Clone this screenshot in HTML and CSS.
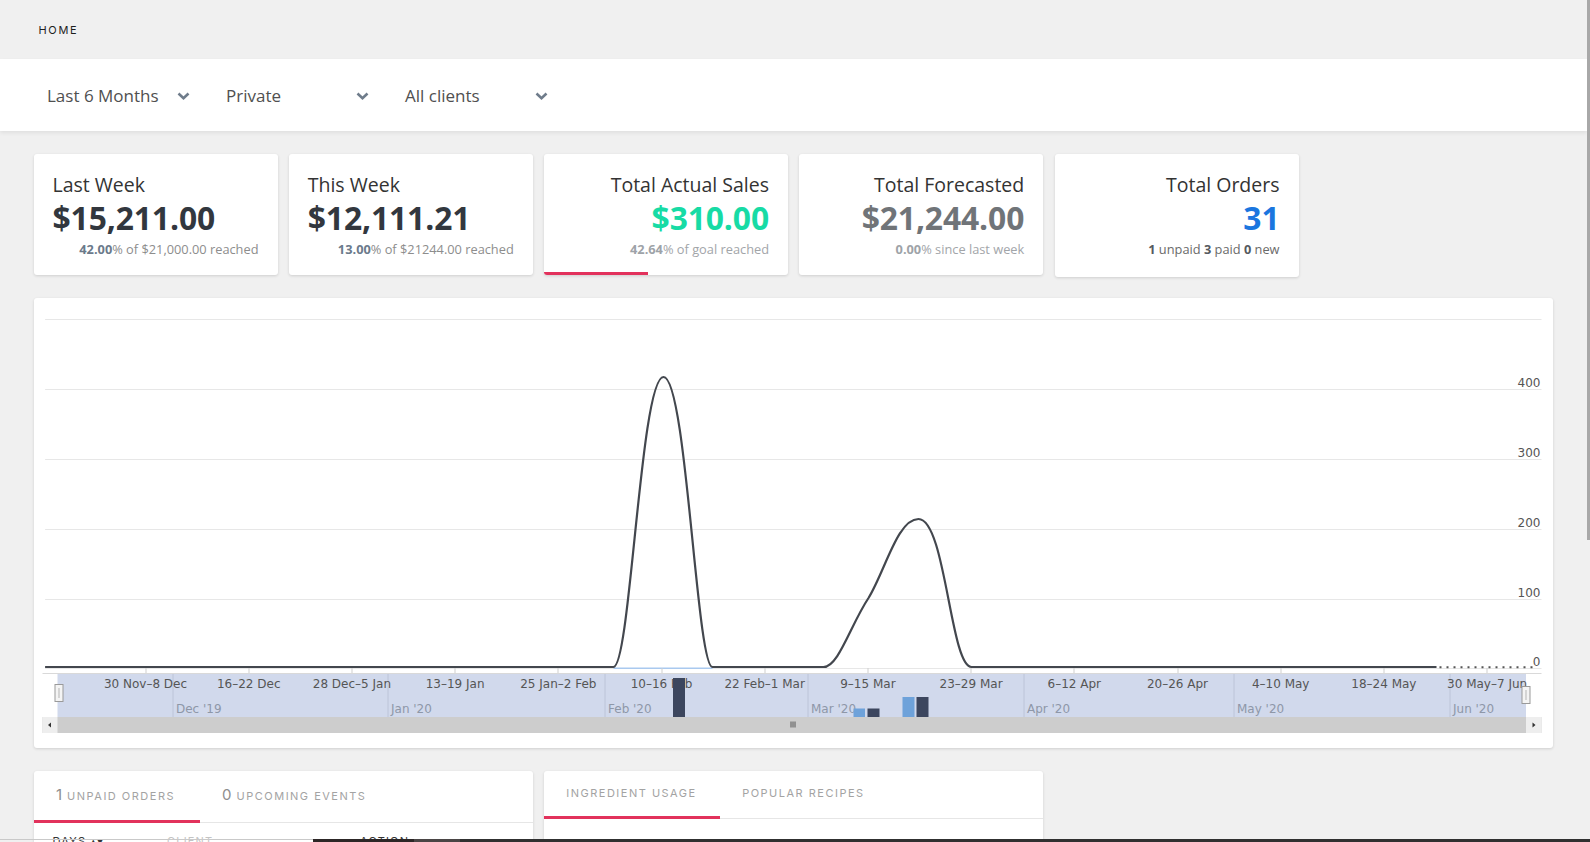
FILE: index.html
```html
<!DOCTYPE html>
<html lang="en">
<head>
<meta charset="utf-8">
<title>Home</title>
<link rel="stylesheet" href="styles.css">
</head>
<body>
<div class="page">
  <header class="topbar"><span class="crumb">HOME</span></header>

  <div class="filters">
    <div class="filter"><span>Last 6 Months</span><svg class="chev" viewBox="0 0 13 8"><polyline points="1.5,1.5 6.5,6.2 11.5,1.5"/></svg></div>
    <div class="filter"><span>Private</span><svg class="chev" viewBox="0 0 13 8"><polyline points="1.5,1.5 6.5,6.2 11.5,1.5"/></svg></div>
    <div class="filter"><span>All clients</span><svg class="chev" viewBox="0 0 13 8"><polyline points="1.5,1.5 6.5,6.2 11.5,1.5"/></svg></div>
  </div>

  <main class="content">
    <section class="stats">
      <div class="stat">
        <div class="stat-title">Last Week</div>
        <div class="stat-value">$15,211.00</div>
        <div class="stat-sub"><b>42.00</b>% of $21,000.00 reached</div>
      </div>
      <div class="stat">
        <div class="stat-title">This Week</div>
        <div class="stat-value">$12,111.21</div>
        <div class="stat-sub"><b>13.00</b>% of $21244.00 reached</div>
      </div>
      <div class="stat right">
        <div class="stat-title">Total Actual Sales</div>
        <div class="stat-value green">$310.00</div>
        <div class="stat-sub muted"><b>42.64</b>% of goal reached</div>
        <div class="progress" style="width:42.64%"></div>
      </div>
      <div class="stat right">
        <div class="stat-title">Total Forecasted</div>
        <div class="stat-value grey">$21,244.00</div>
        <div class="stat-sub muted"><b>0.00</b>% since last week</div>
      </div>
      <div class="stat right tall">
        <div class="stat-title">Total Orders</div>
        <div class="stat-value blue">31</div>
        <div class="stat-sub dark"><b>1</b> unpaid <b>3</b> paid <b>0</b> new</div>
      </div>
    </section>

    <section class="chart-card">
      <svg class="chart" viewBox="33.5 298 1519.5 450" width="1519.5" height="450">
        <g stroke="#e7e7e7" stroke-width="1">
          <line x1="44.6" x2="1541" y1="319.5" y2="319.5"/>
          <line x1="44.6" x2="1541" y1="389.5" y2="389.5"/>
          <line x1="44.6" x2="1541" y1="459.5" y2="459.5"/>
          <line x1="44.6" x2="1541" y1="529.5" y2="529.5"/>
          <line x1="44.6" x2="1541" y1="599.5" y2="599.5"/>
          <line x1="44.6" x2="1541" y1="668.5" y2="668.5"/>
        </g>
        <g font-family="DejaVu Sans, sans-serif" font-size="12" fill="#555" text-anchor="end">
          <text x="1540" y="386.5">400</text>
          <text x="1540" y="456.5">300</text>
          <text x="1540" y="526.5">200</text>
          <text x="1540" y="596.5">100</text>
          <text x="1540" y="665.5">0</text>
        </g>
        <line x1="613" x2="712" y1="668.3" y2="668.3" stroke="#a9c9ef" stroke-width="1.5"/>
        <path d="M44.6,667 L613,667 C630,667 640,377 663,377 C686,377 696,667 712,667 L823,667 C838,667 850,625 868,598 C885,570 897,519 918,519 C945,519 950,667 971,667 L1436,667" fill="none" stroke="#43474e" stroke-width="2.2" stroke-linejoin="round"/>
        <line x1="1439" x2="1532" y1="667.2" y2="667.2" stroke="#555" stroke-width="2" stroke-dasharray="2 5"/>

        <g stroke="#cfcfcf" stroke-width="1">
          <line x1="145.5" x2="145.5" y1="668" y2="674"/>
          <line x1="248.5" x2="248.5" y1="668" y2="674"/>
          <line x1="351.5" x2="351.5" y1="668" y2="674"/>
          <line x1="454.5" x2="454.5" y1="668" y2="674"/>
          <line x1="557.5" x2="557.5" y1="668" y2="674"/>
          <line x1="661.5" x2="661.5" y1="668" y2="674"/>
          <line x1="764.5" x2="764.5" y1="668" y2="674"/>
          <line x1="867.5" x2="867.5" y1="668" y2="674"/>
          <line x1="970.5" x2="970.5" y1="668" y2="674"/>
          <line x1="1073.5" x2="1073.5" y1="668" y2="674"/>
          <line x1="1177.5" x2="1177.5" y1="668" y2="674"/>
          <line x1="1280.5" x2="1280.5" y1="668" y2="674"/>
          <line x1="1383.5" x2="1383.5" y1="668" y2="674"/>
          <line x1="1486.5" x2="1486.5" y1="668" y2="674"/>
        </g>

        <line x1="42" x2="1541" y1="673.5" y2="673.5" stroke="#d9d9d9"/>
        <rect x="57" y="674" width="1468.5" height="43" fill="#d1d9ec"/>
        <g stroke="#bcc4d8" stroke-width="1">
          <line x1="172.5" x2="172.5" y1="674" y2="717"/>
          <line x1="387.5" x2="387.5" y1="674" y2="717"/>
          <line x1="604.5" x2="604.5" y1="674" y2="717"/>
          <line x1="807.5" x2="807.5" y1="674" y2="717"/>
          <line x1="1023.5" x2="1023.5" y1="674" y2="717"/>
          <line x1="1233.5" x2="1233.5" y1="674" y2="717"/>
          <line x1="1449.5" x2="1449.5" y1="674" y2="717"/>
        </g>
        <g font-family="DejaVu Sans, sans-serif" font-size="12" fill="#555" text-anchor="middle">
          <text x="145" y="688">30 Nov–8 Dec</text>
          <text x="248.2" y="688">16–22 Dec</text>
          <text x="351.4" y="688">28 Dec–5 Jan</text>
          <text x="454.6" y="688">13–19 Jan</text>
          <text x="557.8" y="688">25 Jan–2 Feb</text>
          <text x="661" y="688">10–16 Feb</text>
          <text x="764.2" y="688">22 Feb–1 Mar</text>
          <text x="867.4" y="688">9–15 Mar</text>
          <text x="970.6" y="688">23–29 Mar</text>
          <text x="1073.8" y="688">6–12 Apr</text>
          <text x="1177" y="688">20–26 Apr</text>
          <text x="1280.2" y="688">4–10 May</text>
          <text x="1383.4" y="688">18–24 May</text>
          <text x="1486.6" y="688">30 May–7 Jun</text>
        </g>
        <g font-family="DejaVu Sans, sans-serif" font-size="12" fill="#8e97a8">
          <text x="175.5" y="712.5">Dec '19</text>
          <text x="390.5" y="712.5">Jan '20</text>
          <text x="607.5" y="712.5">Feb '20</text>
          <text x="810.5" y="712.5">Mar '20</text>
          <text x="1026.5" y="712.5">Apr '20</text>
          <text x="1236.5" y="712.5">May '20</text>
          <text x="1452.5" y="712.5">Jun '20</text>
        </g>
        <g>
          <rect x="672.5" y="678" width="12" height="39" fill="#3c465e"/>
          <rect x="853" y="708.5" width="11.5" height="8.5" fill="#6ea2da"/>
          <rect x="867" y="708.5" width="12" height="8.5" fill="#3c465e"/>
          <rect x="902" y="697" width="12" height="20" fill="#6ea2da"/>
          <rect x="916" y="697" width="12" height="20" fill="#3c465e"/>
        </g>

        <rect x="42" y="717" width="1499" height="16" fill="#cdcdcd"/>
        <rect x="42" y="717" width="15" height="16" fill="#eeeeee"/>
        <rect x="1525.5" y="717" width="15.5" height="16" fill="#eeeeee"/>
        <polygon points="47.5,725 50.5,722.5 50.5,727.5" fill="#333"/>
        <polygon points="1535,725 1532,722.5 1532,727.5" fill="#333"/>
        <g stroke="#555" stroke-width="1">
          <line x1="790.5" x2="790.5" y1="721.5" y2="727.5"/>
          <line x1="792.5" x2="792.5" y1="721.5" y2="727.5"/>
          <line x1="794.5" x2="794.5" y1="721.5" y2="727.5"/>
        </g>
        <g>
          <rect x="54.5" y="684.5" width="8" height="17" fill="#f4f4f4" stroke="#9a9a9a"/>
          <line x1="58.5" x2="58.5" y1="688" y2="698" stroke="#b5b5b5"/>
          <rect x="1521.5" y="686.5" width="8" height="17" fill="#f4f4f4" stroke="#9a9a9a"/>
          <line x1="1525.5" x2="1525.5" y1="690" y2="700" stroke="#b5b5b5"/>
        </g>
      </svg>
    </section>

    <section class="lower">
      <div class="tabcard a">
        <div class="tabs">
          <div class="tab active"><span class="num">1</span>Unpaid Orders</div>
          <div class="tab"><span class="num">0</span>Upcoming Events</div>
        </div>
        <div class="thead">
          <span class="th">Days ▴▾</span>
          <span class="th light">Client</span>
          <span class="th">Action</span>
        </div>
      </div>
      <div class="tabcard b">
        <div class="tabs">
          <div class="tab active">Ingredient Usage</div>
          <div class="tab">Popular Recipes</div>
        </div>
      </div>
    </section>
  </main>
</div>

<div class="vscroll"></div>
<div class="bottombar"><span class="bb-left"></span><span class="bb-dark"></span><span class="bb-mid"></span><span class="bb-dark2"></span></div>
</body>
</html>
```

FILE: styles.css
```css
* {
  box-sizing: border-box;
  margin: 0;
  padding: 0;
}

html,
body {
  width: 1590px;
  height: 842px;
  overflow: hidden;
}

body {
  background: #f0f0f0;
  font-family: "Open Sans", "Noto Sans", sans-serif;
  color: #333;
}

.page {
  width: 1587px;
}

.topbar {
  height: 59px;
  display: flex;
  align-items: center;
  padding-left: 38.5px;
}

.crumb {
  font-family: Inter, "DejaVu Sans", sans-serif;
  font-size: 11px;
  font-weight: 400;
  letter-spacing: 1.7px;
  color: #1e1e1e;
}

.filters {
  position: relative;
  height: 72px;
  background: #fff;
  display: flex;
  align-items: center;
  gap: 36px;
  padding-left: 47px;
  box-shadow: 0 2px 4px rgba(0, 0, 0, 0.07);
}

.filter {
  width: 143px;
  display: flex;
  justify-content: space-between;
  align-items: center;
  font-size: 17px;
  color: #505050;
  padding-top: 1px;
}

.chev {
  width: 13px;
  height: 8px;
  fill: none;
  stroke: #6f7c8b;
  stroke-width: 2.6;
}

.content {
  padding: 23px 34px 0 33.5px;
}

.stats {
  display: flex;
  align-items: flex-start;
  gap: 11.25px;
}

.stat {
  position: relative;
  overflow: hidden;
  width: 244px;
  height: 120.5px;
  background: #fff;
  border-radius: 3px;
  box-shadow: 0 1px 3px rgba(0, 0, 0, 0.14);
  padding: 17.5px 19px 0 19px;
}

.stat.right {
  text-align: right;
}

.stat.tall {
  height: 122.5px;
}

.stat-title {
  font-size: 19.5px;
  line-height: 26px;
  color: #333;
}

.stat-value {
  margin-top: 3px;
  font-size: 31.8px;
  font-weight: 700;
  line-height: 34px;
  color: #32373e;
  letter-spacing: -0.1px;
}

.stat-value.green {
  color: #17dba5;
}

.stat-value.grey {
  color: #707478;
}

.stat-value.blue {
  color: #1b76df;
}

.stat-sub {
  margin-top: 6px;
  font-size: 12.8px;
  line-height: 16px;
  color: #8d8d8d;
  text-align: right;
}

.stat-sub b {
  font-weight: 700;
  color: #6b7a8b;
}

.stat-sub.muted {
  color: #a2a5a9;
}

.stat-sub.muted b {
  color: #9ea3a8;
}

.stat-sub.dark {
  color: #6a6a6a;
}

.stat-sub.dark b {
  color: #555a60;
}

.progress {
  position: absolute;
  left: 0;
  bottom: 0;
  height: 3px;
  background: #e2325c;
}

.chart-card {
  margin-top: 21.5px;
  height: 450px;
  background: #fff;
  border-radius: 3px;
  box-shadow: 0 1px 3px rgba(0, 0, 0, 0.14);
}

.chart {
  display: block;
}

.lower {
  margin-top: 23px;
  display: flex;
  gap: 11.25px;
}

.tabcard {
  height: 120px;
  background: #fff;
  border-radius: 3px;
  box-shadow: 0 1px 3px rgba(0, 0, 0, 0.14);
}

.tabcard.a {
  width: 499px;
}

.tabcard.b {
  width: 499.5px;
}

.tabs {
  display: flex;
  border-bottom: 1px solid #e6e6e6;
}

.tab {
  padding: 0 23px 0 22.5px;
  margin-bottom: -1px;
  line-height: 47px;
  font-family: Inter, "DejaVu Sans", sans-serif;
  font-size: 11px;
  letter-spacing: 1.5px;
  text-transform: uppercase;
  color: #a3a3a3;
  border-bottom: 3px solid transparent;
  white-space: nowrap;
}

.tabcard.a .tab:first-child {
  padding-right: 24.5px;
}

.tabcard.b .tab {
  line-height: 45px;
}

.tab.active {
  border-bottom-color: #e2325c;
}

.tab .num {
  font-size: 15px;
  letter-spacing: 0;
  color: #8e8e8e;
  margin-right: 5px;
}

.thead {
  display: grid;
  grid-template-columns: 114.5px 193px auto;
  padding: 11px 19px 0;
}

.th {
  font-family: Inter, "DejaVu Sans", sans-serif;
  font-size: 11px;
  letter-spacing: 1.2px;
  text-transform: uppercase;
  color: #333;
  line-height: 14px;
}

.th.light {
  color: #c4c4c4;
}

.vscroll {
  position: fixed;
  top: 0;
  right: 0;
  width: 3px;
  height: 540px;
  background: #a8a8a8;
}

.bottombar {
  position: fixed;
  left: 0;
  bottom: 0;
  width: 1590px;
  height: 3px;
  display: flex;
}

.bb-left {
  width: 313px;
  border-top: 1px solid #c9c9c9;
}

.bb-dark {
  width: 101px;
  background: #2c2626;
}

.bb-mid {
  width: 46px;
  background: #4a4545;
}

.bb-dark2 {
  flex: 1;
  background: #303030;
}
```
